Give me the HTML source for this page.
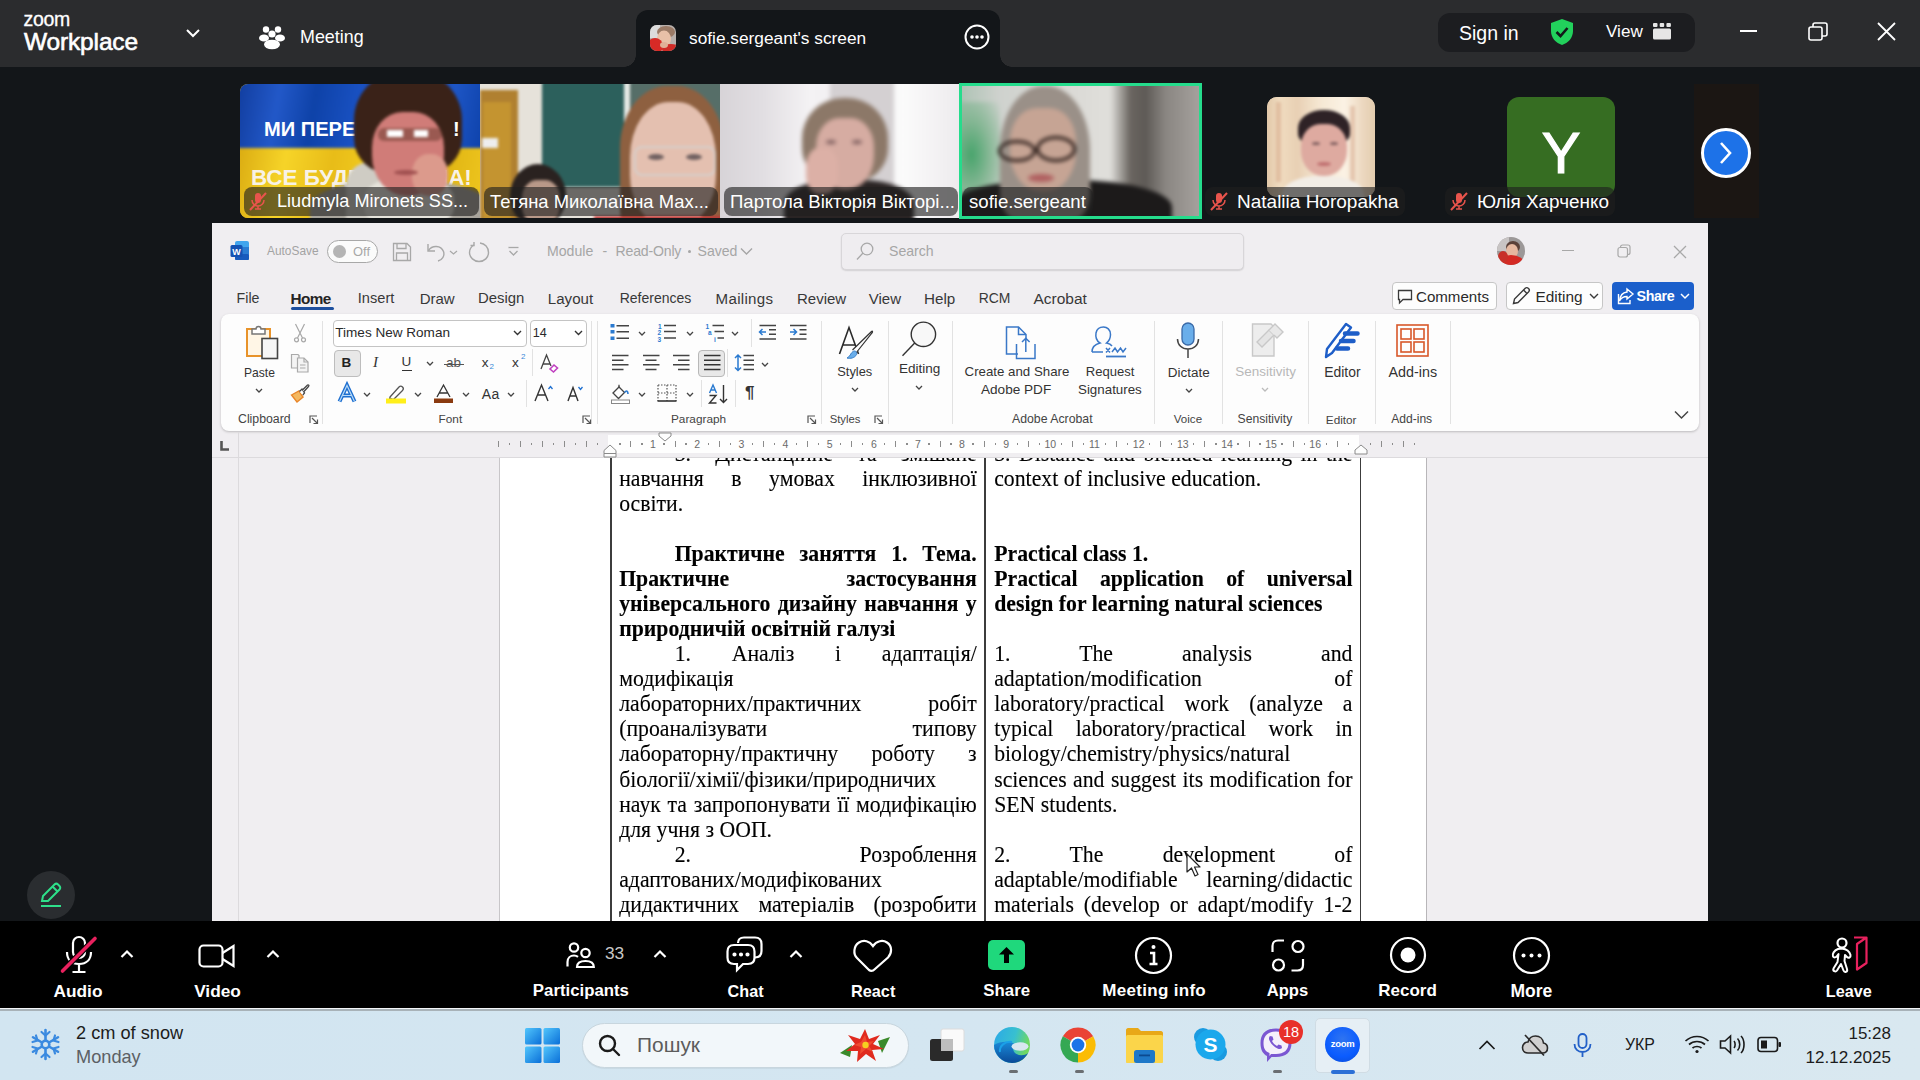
<!DOCTYPE html>
<html><head><meta charset="utf-8">
<style>
*{box-sizing:border-box}
body{margin:0;width:1920px;height:1080px;position:relative;overflow:hidden;background:#131619;font-family:"Liberation Sans",sans-serif}
.a{position:absolute}
.t{position:absolute;white-space:nowrap}
svg{position:absolute;overflow:visible}
.lbl{position:absolute;height:29px;border-radius:8px;background:rgba(30,30,30,0.62);color:#fff;font-size:18.4px;line-height:29px;white-space:nowrap}
.bl{position:absolute;border-radius:50%}
.dl{position:absolute;font-family:"Liberation Serif",serif;font-size:21.75px;line-height:25.07px;color:#000;white-space:nowrap;text-align:left;transform:scaleY(1.065);transform-origin:0 5.8px;-webkit-text-stroke:0.12px #000}
.db{font-weight:bold}
.dj{text-align:justify;text-align-last:justify;white-space:normal}
</style></head><body>
<!-- TOP BAR -->
<div class="a" style="left:0;top:0;width:1920px;height:67px;background:#2b2c2e"></div>
<div class="t" style="left:23.5px;top:10px;font-size:19.5px;line-height:19px;color:#fff;letter-spacing:-0.3px;-webkit-text-stroke:0.3px #fff">zoom</div>
<div class="t" style="left:24px;top:29px;font-size:24.5px;line-height:26px;color:#fff;letter-spacing:-0.15px;-webkit-text-stroke:0.6px #fff">Workplace</div>
<svg style="left:185px;top:28px" width="16" height="10"><path d="M2 2 L8 8 L14 2" stroke="#fff" stroke-width="2" fill="none"/></svg>
<svg style="left:259px;top:24px" width="26" height="26" viewBox="0 0 26 26"><circle cx="7" cy="5.5" r="3.2" fill="#fff"/><circle cx="19" cy="5.5" r="3.2" fill="#fff"/><circle cx="13" cy="10" r="3.6" fill="#fff"/><ellipse cx="5" cy="14" rx="5" ry="3.6" fill="#fff"/><ellipse cx="21" cy="14" rx="5" ry="3.6" fill="#fff"/><ellipse cx="13" cy="20.5" rx="8" ry="4.8" fill="#fff"/></svg>
<div class="t" style="left:300px;top:26px;font-size:17.9px;line-height:22px;color:#fff">Meeting</div>
<!-- active tab -->
<div class="a" style="left:636px;top:10px;width:364px;height:57px;background:#131619;border-radius:12px 12px 0 0"></div>
<div class="a" style="left:624px;top:55px;width:12px;height:12px;background:radial-gradient(circle at 0 0,#2b2c2e 11.5px,#131619 12px)"></div>
<div class="a" style="left:1000px;top:55px;width:12px;height:12px;background:radial-gradient(circle at 100% 0,#2b2c2e 11.5px,#131619 12px)"></div>
<svg style="left:650px;top:25px" width="26" height="26" viewBox="0 0 26 26"><defs><clipPath id="tac"><rect width="26" height="26" rx="7"/></clipPath></defs><g clip-path="url(#tac)"><rect width="26" height="26" fill="#b8b0ac"/><rect x="0" y="0" width="10" height="13" fill="#dcdcdc"/><ellipse cx="16" cy="7" rx="9" ry="6" fill="#9a7a66"/><ellipse cx="14" cy="14" rx="7" ry="8.5" fill="#e8c0a8"/><ellipse cx="5" cy="21" rx="8" ry="8" fill="#d82a26"/><ellipse cx="21" cy="24" rx="9" ry="5" fill="#d02a26"/><ellipse cx="14" cy="20" rx="4" ry="3" fill="#e0b098"/></g></svg>
<div class="t" style="left:689px;top:27px;font-size:17.3px;line-height:22px;color:#fff">sofie.sergeant's screen</div>
<svg style="left:964px;top:24px" width="26" height="26" viewBox="0 0 26 26"><circle cx="13" cy="13" r="11.5" stroke="#fff" stroke-width="2" fill="none"/><circle cx="8" cy="13" r="1.8" fill="#fff"/><circle cx="13" cy="13" r="1.8" fill="#fff"/><circle cx="18" cy="13" r="1.8" fill="#fff"/></svg>
<!-- sign-in pill -->
<div class="a" style="left:1438px;top:13px;width:257px;height:39px;border-radius:12px;background:#1c1d20"></div>
<div class="t" style="left:1459px;top:21px;font-size:19.5px;line-height:24px;color:#fff">Sign in</div>
<svg style="left:1549px;top:18px" width="26" height="28" viewBox="0 0 26 28"><path d="M13 1 L24 5 L24 13 C24 20 19 25 13 27 C7 25 2 20 2 13 L2 5 Z" fill="#22d15c"/><path d="M7.5 14 L11.5 18 L18.5 10" stroke="#13181a" stroke-width="2.6" fill="none"/></svg>
<div class="t" style="left:1606px;top:21px;font-size:17.1px;line-height:22px;color:#fff">View</div>
<svg style="left:1653px;top:23px" width="18" height="17" viewBox="0 0 18 17"><rect x="0" y="0" width="4.5" height="4" rx="1" fill="#e6e6e6"/><rect x="6.7" y="0" width="4.5" height="4" rx="1" fill="#e6e6e6"/><rect x="13.4" y="0" width="4.5" height="4" rx="1" fill="#e6e6e6"/><rect x="0" y="5.5" width="18" height="11" rx="1.5" fill="#e6e6e6"/></svg>
<!-- window controls -->
<div class="a" style="left:1740px;top:30px;width:17px;height:2px;background:#fff"></div>
<svg style="left:1808px;top:22px" width="20" height="20" viewBox="0 0 20 20"><rect x="1" y="5" width="13" height="13" rx="2" stroke="#fff" stroke-width="1.6" fill="none"/><path d="M5 5 V3 a2 2 0 0 1 2 -2 H17 a2 2 0 0 1 2 2 V12 a2 2 0 0 1 -2 2 H14" stroke="#fff" stroke-width="1.6" fill="none"/></svg>
<svg style="left:1877px;top:22px" width="19" height="19" viewBox="0 0 19 19"><path d="M1 1 L18 18 M18 1 L1 18" stroke="#fff" stroke-width="1.8"/></svg>

<!-- STRIP THUMBNAILS -->
<!-- thumb 1: Ukrainian flag -->
<div class="a" style="left:240px;top:84px;width:240px;height:134px;overflow:hidden;border-radius:8px 0 0 8px;background:#e8c01a">
 <div class="a" style="left:-6px;top:-6px;width:252px;height:146px;filter:blur(1.6px)">
  <div class="a" style="left:0;top:0;width:252px;height:70px;background:linear-gradient(100deg,#0f3a9a 0%,#2258c8 18%,#0e42a8 32%,#1a52c4 50%,#0a3c9e 66%,#1e56c6 84%,#0c40a8 100%)"></div>
  <div class="a" style="left:0;top:70px;width:252px;height:76px;background:linear-gradient(100deg,#d8a810 0%,#f6d428 20%,#e8bc18 38%,#f4d020 58%,#dcb010 76%,#f0c820 100%)"></div>
 </div>
 <div class="t" style="left:24px;top:34px;font-size:20.1px;line-height:22px;font-weight:bold;color:#fff">МИ ПЕРЕМОЖЕМО!</div>
 <div class="t" style="left:11px;top:82px;font-size:22.4px;line-height:24px;font-weight:bold;color:#f8f2e6">ВСЕ БУДЕ УКРАЇНА!</div>
 <div class="a" style="left:-6px;top:-6px;width:252px;height:146px;filter:blur(1.4px)">
  <div class="a" style="left:76px;top:102px;width:180px;height:60px;border-radius:45% 45% 0 0;background:#a8a49c"></div>
  <div class="a" style="left:112px;top:84px;width:60px;height:60px;border-radius:40% 40% 0 0;background:#cfccc4"></div>
  <div class="a" style="left:130px;top:100px;width:90px;height:50px;border-radius:40%;background:#e6e4dc"></div>
  <div class="a" style="left:120px;top:-8px;width:108px;height:104px;border-radius:48% 48% 34% 34%;background:#3a2218"></div>
  <div class="a" style="left:138px;top:34px;width:72px;height:84px;border-radius:42% 42% 48% 48%;background:#d07c78"></div>
  <div class="a" style="left:178px;top:76px;width:36px;height:42px;border-radius:45%;background:#dc9a8c"></div>
  <div class="a" style="left:144px;top:50px;width:64px;height:13px;border-radius:6px;background:rgba(110,60,50,0.55)"></div>
  <div class="a" style="left:153px;top:52px;width:16px;height:7px;background:#fff"></div>
  <div class="a" style="left:180px;top:52px;width:14px;height:7px;background:#fff"></div>
  <div class="a" style="left:160px;top:92px;width:24px;height:5px;border-radius:50%;background:#a05050"></div>
 </div>
 <div class="t" style="left:213px;top:34px;font-size:20.1px;line-height:22px;font-weight:bold;color:#fff">!</div>
</div>
<!-- thumb 2: classroom -->
<div class="a" style="left:480px;top:84px;width:240px;height:134px;overflow:hidden;background:#e4e0d8">
 <div class="a" style="left:-6px;top:-6px;width:252px;height:146px;filter:blur(1.6px)">
  <div class="a" style="left:0;top:0;width:252px;height:146px;background:#e6e2da"></div>
  <div class="a" style="left:6px;top:12px;width:38px;height:134px;background:#b08030"></div>
  <div class="a" style="left:9px;top:24px;width:28px;height:122px;background:#c49430"></div>
  <div class="a" style="left:8px;top:60px;width:16px;height:10px;background:#eeeeee"></div>
  <div class="a" style="left:68px;top:0;width:82px;height:109px;background:#2c605c"></div>
  <div class="a" style="left:150px;top:0;width:6px;height:109px;background:#e6eae6"></div>
  <div class="a" style="left:156px;top:0;width:96px;height:116px;background:#566e68"></div>
  <div class="a" style="left:36px;top:86px;width:56px;height:64px;border-radius:50%;background:#2a2220"></div>
  <div class="a" style="left:48px;top:102px;width:38px;height:44px;border-radius:40%;background:#b89888"></div>
  <div class="a" style="left:146px;top:8px;width:104px;height:138px;border-radius:45% 45% 10% 10%;background:#8e6040"></div>
  <div class="a" style="left:156px;top:24px;width:86px;height:122px;border-radius:45% 45% 40% 40%;background:#e4c0b0"></div>
  <div class="a" style="left:160px;top:68px;width:82px;height:30px;border-radius:8px;border:2px solid rgba(210,210,210,0.8)"></div>
  <div class="a" style="left:174px;top:76px;width:16px;height:6px;border-radius:50%;background:#706060"></div>
  <div class="a" style="left:212px;top:76px;width:16px;height:6px;border-radius:50%;background:#706060"></div>
  <div class="a" style="left:120px;top:138px;width:132px;height:10px;background:#c03838"></div>
 </div>
</div>
<!-- thumb 3: bright room -->
<div class="a" style="left:720px;top:84px;width:240px;height:134px;overflow:hidden;background:#eeeaee">
 <div class="a" style="left:-6px;top:-6px;width:252px;height:146px;filter:blur(2px)">
  <div class="a" style="left:0;top:0;width:252px;height:146px;background:linear-gradient(90deg,#d6d2d6 0%,#e2dfe3 20%,#f4f2f4 38%,#f0eef0 55%,#fbfbfb 75%,#ece9ec 100%)"></div>
  <div class="a" style="left:116px;top:0;width:64px;height:120px;background:#d4d0d2"></div>
  <div class="a" style="left:70px;top:102px;width:130px;height:60px;border-radius:40% 40% 0 0;background:#2a2424"></div>
  <div class="a" style="left:88px;top:20px;width:86px;height:84px;border-radius:48% 48% 40% 40%;background:#8c7868"></div>
  <div class="a" style="left:102px;top:40px;width:58px;height:72px;border-radius:40% 40% 48% 48%;background:#d6aca2"></div>
  <div class="a" style="left:92px;top:70px;width:32px;height:46px;border-radius:40%;background:#dcb0a6"></div>
  <div class="a" style="left:112px;top:62px;width:10px;height:4px;border-radius:50%;background:#806060"></div>
  <div class="a" style="left:138px;top:62px;width:10px;height:4px;border-radius:50%;background:#806060"></div>
 </div>
</div>
<!-- thumb 4: sofie -->
<div class="a" style="left:960px;top:84px;width:240px;height:134px;overflow:hidden;background:#d0d0cc">
 <div class="a" style="left:-6px;top:-6px;width:252px;height:146px;filter:blur(2.2px)">
  <div class="a" style="left:0;top:0;width:252px;height:146px;background:linear-gradient(90deg,#a8c0b0 0%,#cfd2ce 18%,#dad9d5 45%,#e0dfdb 62%,#6a6560 70%,#5e5a56 76%,#8a8682 84%,#aaa6a2 100%)"></div>
  <div class="a" style="left:2px;top:24px;width:44px;height:96px;background:radial-gradient(ellipse at 35% 55%,#48a46c 0%,rgba(110,175,130,0.7) 45%,rgba(200,210,200,0) 100%)"></div>
  <div class="a" style="left:-4px;top:102px;width:222px;height:60px;border-radius:45% 45% 0 0;background:#1c1a1a"></div>
  <div class="a" style="left:46px;top:8px;width:90px;height:134px;border-radius:48% 48% 20% 20%;background:#9a9088"></div>
  <div class="a" style="left:56px;top:30px;width:66px;height:84px;border-radius:40% 40% 48% 48%;background:#c6a494"></div>
  <div class="a" style="left:44px;top:62px;width:38px;height:22px;border-radius:50%;border:3.5px solid #2a1c18"></div>
  <div class="a" style="left:82px;top:58px;width:40px;height:26px;border-radius:50%;border:3.5px solid #2a1c18"></div>
  <div class="a" style="left:74px;top:96px;width:26px;height:8px;border-radius:50%;background:#b06060"></div>
 </div>
</div>
<div class="a" style="left:959px;top:83px;width:243px;height:136px;border:3px solid #25dc8c"></div>

<!-- labels -->
<div class="lbl" style="left:244px;top:187px;width:235px"></div>
<svg style="left:248px;top:191px" width="20" height="20" viewBox="0 0 20 20"><rect x="7" y="2" width="6" height="10" rx="3" fill="#e8544c"/><path d="M4 9 a6 6 0 0 0 12 0 M10 15 V18 M7 18 H13" stroke="#e8544c" stroke-width="1.5" fill="none"/><path d="M2 19 L18 2" stroke="#e8544c" stroke-width="2"/></svg>
<div class="t" style="left:277px;top:187px;font-size:18.1px;line-height:29px;color:#fff">Liudmyla Mironets SS...</div>
<div class="lbl" style="left:484px;top:187px;width:234px"></div>
<div class="t" style="left:490px;top:187px;font-size:18.4px;line-height:29px;color:#fff">Тетяна Миколаївна Мах...</div>
<div class="lbl" style="left:724px;top:187px;width:234px"></div>
<div class="t" style="left:730px;top:187px;font-size:18.6px;line-height:29px;color:#fff">Партола Вікторія Вікторі...</div>
<div class="lbl" style="left:963px;top:187px;width:130px"></div>
<div class="t" style="left:969px;top:187px;font-size:18.6px;line-height:29px;color:#fff">sofie.sergeant</div>
<!-- Nataliia -->
<div class="a" style="left:1267px;top:97px;width:108px;height:100px;border-radius:10px;overflow:hidden;background:#ecdcc4">
 <div class="a" style="left:-5px;top:-5px;width:118px;height:110px;filter:blur(1.5px)">
  <div class="a" style="left:0;top:0;width:118px;height:110px;background:linear-gradient(90deg,#dcc0a0 0%,#f0dcc0 15%,#e8d0b4 30%,#f6e8d4 50%,#fbf2e4 70%,#ecd8c0 85%,#e0c8a8 100%)"></div>
  <div class="a" style="left:14px;top:10px;width:5px;height:80px;background:rgba(200,140,110,0.35)"></div>
  <div class="a" style="left:88px;top:14px;width:5px;height:76px;background:rgba(200,140,110,0.35)"></div>
  <div class="a" style="left:20px;top:84px;width:82px;height:40px;border-radius:45% 45% 0 0;background:#f2ede6"></div>
  <div class="a" style="left:36px;top:18px;width:52px;height:36px;border-radius:50% 50% 35% 35%;background:#2e2226"></div>
  <div class="a" style="left:39px;top:32px;width:46px;height:52px;border-radius:42% 42% 48% 48%;background:#deaaa0"></div>
  <div class="a" style="left:50px;top:50px;width:8px;height:3px;border-radius:50%;background:#806060"></div>
  <div class="a" style="left:68px;top:50px;width:8px;height:3px;border-radius:50%;background:#806060"></div>
  <div class="a" style="left:55px;top:70px;width:14px;height:4px;border-radius:50%;background:#c07070"></div>
 </div>
</div>
<div class="lbl" style="left:1205px;top:187px;width:200px"></div>
<svg style="left:1209px;top:191px" width="20" height="20" viewBox="0 0 20 20"><rect x="7" y="2" width="6" height="10" rx="3" fill="#e8544c"/><path d="M4 9 a6 6 0 0 0 12 0 M10 15 V18 M7 18 H13" stroke="#e8544c" stroke-width="1.5" fill="none"/><path d="M2 19 L18 2" stroke="#e8544c" stroke-width="2"/></svg>
<div class="t" style="left:1237px;top:187px;font-size:19px;line-height:29px;color:#fff">Nataliia Horopakha</div>
<!-- Y avatar -->
<div class="a" style="left:1507px;top:97px;width:108px;height:100px;border-radius:12px;background:#366d22"></div>
<div class="t" style="left:1507px;top:123px;width:108px;text-align:center;font-size:58px;line-height:60px;color:#fff;-webkit-text-stroke:1.2px #fff">Y</div>
<div class="lbl" style="left:1445px;top:187px;width:170px"></div>
<svg style="left:1449px;top:191px" width="20" height="20" viewBox="0 0 20 20"><rect x="7" y="2" width="6" height="10" rx="3" fill="#e8544c"/><path d="M4 9 a6 6 0 0 0 12 0 M10 15 V18 M7 18 H13" stroke="#e8544c" stroke-width="1.5" fill="none"/><path d="M2 19 L18 2" stroke="#e8544c" stroke-width="2"/></svg>
<div class="t" style="left:1477px;top:187px;font-size:18.9px;line-height:29px;color:#fff">Юлія Харченко</div>
<!-- right tile + arrow -->
<div class="a" style="left:1694px;top:84px;width:65px;height:134px;background:#1b1613"></div>
<div class="a" style="left:1701px;top:128px;width:50px;height:50px;border-radius:50%;background:#1d72e8;border:3.5px solid #fff"></div>
<svg style="left:1717px;top:141px" width="18" height="24" viewBox="0 0 18 24"><path d="M4 2 L13 12 L4 22" stroke="#fff" stroke-width="2.6" fill="none"/></svg>


<!-- annotate button -->
<div class="a" style="left:27px;top:871px;width:48px;height:48px;border-radius:50%;background:#2a2d30"></div>
<svg style="left:39px;top:881px" width="25" height="27" viewBox="0 0 25 27" fill="none" stroke="#2ee08a" stroke-width="2"><path d="M3 20 L4 15 L15.5 3.5 C16.5 2.5 18 2.5 19 3.5 L20.5 5 C21.5 6 21.5 7.5 20.5 8.5 L9 20 Z"/><path d="M13.5 5.5 L18.5 10.5"/><path d="M2 25 H22"/></svg>
<!-- WORD WINDOW -->
<div class="a" style="left:212px;top:223px;width:1496px;height:698px;background:#f0eef1"></div>
<!-- title bar -->
<svg style="left:230px;top:240px" width="20" height="21" viewBox="0 0 20 21"><rect x="5" y="1" width="14" height="19" rx="2" fill="#41a5ee"/><rect x="5" y="7" width="14" height="7" fill="#2b7cd3"/><rect x="5" y="14" width="14" height="6" rx="1" fill="#185abd"/><rect x="0.5" y="5" width="12" height="12" rx="1.5" fill="#1552b3"/><text x="6.5" y="14.5" font-family="Liberation Sans" font-weight="bold" font-size="9" fill="#fff" text-anchor="middle">W</text></svg>
<div class="t" style="left:267px;top:243px;font-size:11.9px;line-height:17px;color:#a3a3a3">AutoSave</div>
<div class="a" style="left:327px;top:240px;width:51px;height:23px;border-radius:12px;border:1.3px solid #a8a8a8;background:#fbfbfb"></div>
<div class="a" style="left:333px;top:245px;width:13px;height:13px;border-radius:50%;background:#b5b5b5"></div>
<div class="t" style="left:353px;top:243px;font-size:12.9px;line-height:17px;color:#a8a8a8">Off</div>
<svg style="left:392px;top:242px" width="20" height="20" viewBox="0 0 20 20" fill="none" stroke="#a8a8a8" stroke-width="1.3"><path d="M1.5 1.5 H15 L18.5 5 V18.5 H1.5 Z"/><path d="M5 1.5 V6.5 H14 V1.5"/><path d="M4.5 18.5 V11 H15.5 V18.5"/></svg>
<svg style="left:425px;top:242px" width="34" height="20" viewBox="0 0 34 20" fill="none" stroke="#a8a8a8" stroke-width="1.4"><path d="M3 2 V9 H10"/><path d="M3.5 8.5 C7 3 16 3 18.5 9.5 C20 14 17 18 13 19"/><path d="M25 9 L28.5 12 L32 9" stroke-width="1.2"/></svg>
<svg style="left:468px;top:241px" width="22" height="22" viewBox="0 0 22 22" fill="none" stroke="#a8a8a8" stroke-width="1.4"><path d="M12 2 C17 2.5 20.5 6.5 20.5 11.5 C20.5 16.5 16.5 20.5 11 20.5 C6 20.5 1.5 16.5 1.5 11.5 C1.5 8 3.5 5.5 6 4"/><path d="M6 1 V4.5 H2.5"/></svg>
<svg style="left:507px;top:245px" width="13" height="13" viewBox="0 0 13 13" fill="none" stroke="#a8a8a8" stroke-width="1.3"><path d="M1.5 2.5 H11.5"/><path d="M2.5 6 L6.5 10 L10.5 6"/></svg>
<div class="t" style="left:547px;top:242px;font-size:14.1px;line-height:19px;color:#a6a6a6">Module</div>
<div class="t" style="left:602.5px;top:242px;font-size:14.1px;line-height:19px;color:#a6a6a6">-</div>
<div class="t" style="left:615.6px;top:242px;font-size:14.1px;line-height:19px;color:#a6a6a6;letter-spacing:-0.2px">Read-Only</div>
<div class="a" style="left:687.5px;top:249.5px;width:3.5px;height:3.5px;border-radius:50%;background:#a6a6a6"></div>
<div class="t" style="left:697.5px;top:242px;font-size:14.1px;line-height:19px;color:#a6a6a6">Saved</div>
<svg style="left:740px;top:247px" width="13" height="9" viewBox="0 0 13 9" fill="none" stroke="#a6a6a6" stroke-width="1.4"><path d="M1 1.5 L6.5 7 L12 1.5"/></svg>
<div class="a" style="left:841px;top:233px;width:403px;height:37px;border-radius:5px;border:1px solid #d8d6d9;background:#efedf0;box-shadow:0 1px 1.5px rgba(0,0,0,0.12)"></div>
<svg style="left:856px;top:242px" width="18" height="19" viewBox="0 0 18 19" fill="none" stroke="#a8a8a8" stroke-width="1.3"><circle cx="11" cy="7" r="5.8"/><path d="M7 11 L1 17.5"/></svg>
<div class="t" style="left:889px;top:242px;font-size:14.1px;line-height:19px;color:#a6a6a6">Search</div>
<svg style="left:1497px;top:237px" width="28" height="28" viewBox="0 0 28 28"><defs><clipPath id="avc"><circle cx="14" cy="14" r="14"/></clipPath></defs><g clip-path="url(#avc)"><rect width="28" height="28" fill="#9c9898"/><rect x="0" y="0" width="12" height="14" fill="#c8c4c4"/><ellipse cx="16" cy="10" rx="7" ry="6" fill="#5a4038"/><ellipse cx="15" cy="14" rx="6" ry="7" fill="#e6b8a0"/><ellipse cx="14" cy="27" rx="14" ry="9" fill="#d42a24"/><ellipse cx="6" cy="20" rx="5" ry="6" fill="#c83028"/></g></svg>
<div class="a" style="left:1562px;top:250px;width:12px;height:1.3px;background:#a8a8a8"></div>
<svg style="left:1617px;top:244px" width="14" height="14" viewBox="0 0 14 14" fill="none" stroke="#a8a8a8" stroke-width="1.2"><rect x="1" y="3.5" width="9.5" height="9.5" rx="2"/><path d="M3.5 3.5 V3 a2 2 0 0 1 2 -2 H11 a2 2 0 0 1 2 2 V8.5 a2 2 0 0 1 -2 2 H10.5"/></svg>
<svg style="left:1673px;top:245px" width="14" height="14" viewBox="0 0 14 14" fill="none" stroke="#a8a8a8" stroke-width="1.3"><path d="M1 1 L13 13 M13 1 L1 13"/></svg>
<!-- tabs -->
<div class="t" style="left:236.6px;top:289px;font-size:14.2px;line-height:19px;color:#383838">File</div>
<div class="t" style="left:290.6px;top:289px;font-size:15.3px;line-height:19px;color:#242424;font-weight:bold;letter-spacing:-0.6px">Home</div>
<div class="a" style="left:290.6px;top:307px;width:43.5px;height:3px;border-radius:1.5px;background:#1d4f9e"></div>
<div class="t" style="left:357.8px;top:289px;font-size:14.6px;line-height:19px;color:#383838">Insert</div>
<div class="t" style="left:419.7px;top:289px;font-size:15px;line-height:19px;color:#383838">Draw</div>
<div class="t" style="left:478px;top:289px;font-size:14.9px;line-height:19px;color:#383838">Design</div>
<div class="t" style="left:547.8px;top:289px;font-size:15.1px;line-height:19px;color:#383838">Layout</div>
<div class="t" style="left:619.7px;top:289px;font-size:14px;line-height:19px;color:#383838">References</div>
<div class="t" style="left:715.6px;top:289px;font-size:15.1px;line-height:19px;color:#383838;letter-spacing:0.3px">Mailings</div>
<div class="t" style="left:797px;top:289px;font-size:15px;line-height:19px;color:#383838">Review</div>
<div class="t" style="left:868.8px;top:289px;font-size:15px;line-height:19px;color:#383838">View</div>
<div class="t" style="left:924px;top:289px;font-size:15.2px;line-height:19px;color:#383838">Help</div>
<div class="t" style="left:978.8px;top:289px;font-size:13.9px;line-height:19px;color:#383838">RCM</div>
<div class="t" style="left:1033.4px;top:289px;font-size:15.5px;line-height:19px;color:#383838">Acrobat</div>
<!-- buttons -->
<div class="a" style="left:1392px;top:282px;width:105px;height:28px;border-radius:4px;border:1px solid #c6c6c6;background:#fdfdfd"></div>
<svg style="left:1397px;top:289px" width="16" height="16" viewBox="0 0 16 16" fill="none" stroke="#3a3a3a" stroke-width="1.3"><path d="M1.5 1.5 H14.5 V10.5 H6 L2.5 14 V10.5 H1.5 Z"/></svg>
<div class="t" style="left:1416px;top:287px;font-size:15.1px;line-height:19px;color:#2a2a2a">Comments</div>
<div class="a" style="left:1506px;top:282px;width:97px;height:28px;border-radius:4px;border:1px solid #c6c6c6;background:#fdfdfd"></div>
<svg style="left:1511px;top:286px" width="20" height="20" viewBox="0 0 20 20" fill="none" stroke="#3a3a3a" stroke-width="1.4"><path d="M2.5 17.5 L3.5 13 L14 2.5 C15 1.5 16.5 1.5 17.5 2.5 C18.5 3.5 18.5 5 17.5 6 L7 16.5 Z"/><path d="M12.5 4 L16 7.5"/></svg>
<div class="t" style="left:1535.5px;top:287px;font-size:15.4px;line-height:19px;color:#2a2a2a">Editing</div>
<svg style="left:1589px;top:293px" width="10" height="7" viewBox="0 0 10 7" fill="none" stroke="#3a3a3a" stroke-width="1.4"><path d="M1 1 L5 5 L9 1"/></svg>
<div class="a" style="left:1612px;top:282px;width:82px;height:28px;border-radius:4px;background:#1b5fcb"></div>
<svg style="left:1617px;top:287px" width="18" height="18" viewBox="0 0 18 18" fill="none" stroke="#fff" stroke-width="1.4"><path d="M10 2 L16 7 L10 12 V9.5 C6 9.5 4 11 2.5 14 C3 9 5.5 5.5 10 5 Z"/><path d="M1.5 7 V16.5 H13 V13"/></svg>
<div class="t" style="left:1636.5px;top:287px;font-size:14.3px;line-height:19px;color:#fff;font-weight:bold;letter-spacing:-0.4px">Share</div>
<svg style="left:1680px;top:293px" width="10" height="7" viewBox="0 0 10 7" fill="none" stroke="#fff" stroke-width="1.5"><path d="M1 1 L5 5 L9 1"/></svg>
<!-- RIBBON -->
<div class="a" style="left:221px;top:314px;width:1478px;height:117px;border-radius:8px;background:#fdfdfd;box-shadow:0 1px 2.5px rgba(0,0,0,0.22)"></div>
<!-- Clipboard -->
<svg style="left:245px;top:323px" width="34" height="37" viewBox="0 0 34 37"><rect x="2" y="6" width="23" height="27" fill="#fff6e6" stroke="#e8932a" stroke-width="2"/><path d="M7 11 V6 H11 C11 2.5 16 2.5 16 6 H20 V11 Z" fill="#fff" stroke="#777" stroke-width="1.5"/><rect x="17" y="15.5" width="15.5" height="20" fill="#f6f6f6" stroke="#444" stroke-width="1.6"/></svg>
<div class="t" style="left:244px;top:365px;font-size:12.1px;line-height:17px;color:#333">Paste</div>
<svg style="left:255px;top:388px" width="8" height="6" viewBox="0 0 8 6" fill="none" stroke="#444" stroke-width="1.3"><path d="M1 1 L4 4 L7 1"/></svg>
<svg style="left:293px;top:323px" width="14" height="20" viewBox="0 0 14 20" fill="none" stroke="#a8a8a8" stroke-width="1.2"><path d="M2.5 1 L9.5 15 M11.5 1 L4.5 15"/><circle cx="3.5" cy="16.8" r="2"/><circle cx="10.5" cy="16.8" r="2"/></svg>
<svg style="left:290px;top:353px" width="20" height="20" viewBox="0 0 20 20" fill="none" stroke="#aaa" stroke-width="1.2"><path d="M1.5 1.5 H8 L9 2.5 V15 H1.5 Z" fill="#f4f4f4"/><path d="M7.5 5 H14 L18 9 V19 H7.5 Z" fill="#f4f4f4"/><path d="M14 5 V9 H18 M10 12 H15.5 M10 15 H15.5"/></svg>
<svg style="left:290px;top:383px" width="20" height="20" viewBox="0 0 20 20"><path d="M1.5 12 L9 8 L13 14 L7 19 Z" fill="#f4b860" stroke="#e8862a" stroke-width="1.4"/><path d="M9.5 8.5 L12 6 L14.5 10 L12.8 12.2" fill="#fff" stroke="#444" stroke-width="1.3"/><path d="M12.5 7 L17.5 2 C18.5 1.5 19.5 2.5 18.5 3.5 L14 8.5" fill="#fff" stroke="#444" stroke-width="1.3"/></svg>
<div class="t" style="left:238px;top:411px;font-size:12.3px;line-height:17px;color:#444">Clipboard</div>
<svg style="left:309px;top:415px" width="10" height="10" viewBox="0 0 10 10" fill="none" stroke="#555" stroke-width="1.2"><path d="M1 8 V1 H8"/><path d="M3 3 L8.5 8.5 M4.5 8.5 H8.5 V4.5"/></svg>
<div class="a" style="left:322px;top:321px;width:1px;height:103px;background:#e2e2e2"></div>
<!-- Font -->
<div class="a" style="left:333px;top:320px;width:194px;height:27px;border-radius:4px;border:1px solid #c4c4c4;background:#fff"></div>
<div class="t" style="left:335.3px;top:324px;font-size:13.55px;line-height:18px;color:#2a2a2a">Times New Roman</div>
<svg style="left:513px;top:330px" width="9" height="6" viewBox="0 0 9 6" fill="none" stroke="#333" stroke-width="1.4"><path d="M1 1 L4.5 4.5 L8 1"/></svg>
<div class="a" style="left:530px;top:320px;width:57px;height:27px;border-radius:4px;border:1px solid #c4c4c4;background:#fff"></div>
<div class="t" style="left:532.8px;top:324px;font-size:12.6px;line-height:18px;color:#2a2a2a">14</div>
<svg style="left:574px;top:330px" width="9" height="6" viewBox="0 0 9 6" fill="none" stroke="#333" stroke-width="1.4"><path d="M1 1 L4.5 4.5 L8 1"/></svg>
<div class="a" style="left:591px;top:321px;width:1px;height:103px;background:#e2e2e2"></div>
<div class="a" style="left:333.5px;top:349.5px;width:27px;height:27px;border-radius:4px;border:1px solid #bdbdbd;background:#e8e8e8"></div>
<div class="t" style="left:341.5px;top:354px;font-size:13.5px;line-height:18px;color:#222;font-weight:bold">B</div>
<div class="t" style="left:373px;top:353px;font-size:15px;line-height:18px;color:#333;font-family:'Liberation Serif';font-style:italic">I</div>
<div class="t" style="left:401.5px;top:353px;font-size:13.5px;line-height:18px;color:#333">U</div>
<div class="a" style="left:401.5px;top:369.5px;width:10.5px;height:1.2px;background:#333"></div>
<svg style="left:426px;top:361px" width="8" height="6" viewBox="0 0 8 6" fill="none" stroke="#444" stroke-width="1.3"><path d="M1 1 L4 4 L7 1"/></svg>
<div class="t" style="left:446px;top:354px;font-size:13.5px;line-height:18px;color:#555">ab</div>
<div class="a" style="left:444px;top:364px;width:20px;height:1.2px;background:#555"></div>
<div class="t" style="left:481.7px;top:354px;font-size:13.5px;line-height:18px;color:#333">x</div>
<div class="t" style="left:489.5px;top:362px;font-size:8px;line-height:10px;color:#3a8ad8">2</div>
<div class="t" style="left:512px;top:354px;font-size:13.5px;line-height:18px;color:#333">x</div>
<div class="t" style="left:521px;top:352px;font-size:8px;line-height:10px;color:#3a8ad8">2</div>
<div class="a" style="left:532px;top:349px;width:1px;height:27px;background:#e2e2e2"></div>
<svg style="left:540px;top:354px" width="19" height="19" viewBox="0 0 19 19"><path d="M1 15 L6.5 1 L11 12 M3 10 H10" fill="none" stroke="#444" stroke-width="1.3"/><path d="M10 15 L14 11 L17.5 14 L13.5 18 Z" fill="#fff" stroke="#c040c0" stroke-width="1.6"/></svg>
<svg style="left:337px;top:384px" width="20" height="19" viewBox="0 0 20 19"><path d="M2.5 17.5 L10 1.5 L17.5 17.5 M5.5 11.5 H14.5" fill="none" stroke="#1e6fd0" stroke-width="4"/><path d="M2.5 17.5 L10 1.5 L17.5 17.5 M5.5 11.5 H14.5" fill="none" stroke="#b8daf6" stroke-width="1.2"/></svg>
<svg style="left:363px;top:392px" width="8" height="6" viewBox="0 0 8 6" fill="none" stroke="#444" stroke-width="1.3"><path d="M1 1 L4 4 L7 1"/></svg>
<svg style="left:386px;top:384px" width="20" height="20" viewBox="0 0 20 20"><path d="M4 13 L13 3 C14 2 15.5 2 16.5 3 C17.5 4 17.5 5.5 16.5 6.5 L7.5 15.5 L3.5 15.5 Z" fill="#fff" stroke="#555" stroke-width="1.3"/><path d="M3.5 15.5 L4 13 L7.5 15.5 Z" fill="#777"/><rect x="0" y="14.5" width="20" height="5" fill="#ffef1a"/></svg>
<svg style="left:414px;top:392px" width="8" height="6" viewBox="0 0 8 6" fill="none" stroke="#444" stroke-width="1.3"><path d="M1 1 L4 4 L7 1"/></svg>
<svg style="left:434px;top:384px" width="19" height="19" viewBox="0 0 19 19"><path d="M3 13 L9.5 1 L16 13 M5.5 9 H13.5" fill="none" stroke="#333" stroke-width="1.3"/><rect x="0" y="14.5" width="19" height="4.5" fill="#8a3a10"/></svg>
<svg style="left:462px;top:392px" width="8" height="6" viewBox="0 0 8 6" fill="none" stroke="#444" stroke-width="1.3"><path d="M1 1 L4 4 L7 1"/></svg>
<div class="t" style="left:481.7px;top:385px;font-size:14px;line-height:18px;color:#333;letter-spacing:0.5px">Aa</div>
<svg style="left:507px;top:392px" width="8" height="6" viewBox="0 0 8 6" fill="none" stroke="#444" stroke-width="1.3"><path d="M1 1 L4 4 L7 1"/></svg>
<div class="a" style="left:526px;top:380px;width:1px;height:27px;background:#e2e2e2"></div>
<svg style="left:534px;top:384px" width="20" height="18" viewBox="0 0 20 18" fill="none"><path d="M1 17 L7.5 1 L14 17 M3.5 11 H11.5" stroke="#333" stroke-width="1.4"/><path d="M14.5 5 L16.5 2.5 L18.5 5" stroke="#1e6fd0" stroke-width="1.3"/></svg>
<svg style="left:567px;top:386px" width="17" height="16" viewBox="0 0 17 16" fill="none"><path d="M1 15 L6 1.5 L11 15 M3 10 H9" stroke="#333" stroke-width="1.4"/><path d="M11.5 1 L13.5 3.5 L15.5 1" stroke="#1e6fd0" stroke-width="1.3"/></svg>
<div class="t" style="left:438.6px;top:411px;font-size:11.8px;line-height:17px;color:#444">Font</div>
<svg style="left:582px;top:415px" width="10" height="10" viewBox="0 0 10 10" fill="none" stroke="#555" stroke-width="1.2"><path d="M1 8 V1 H8"/><path d="M3 3 L8.5 8.5 M4.5 8.5 H8.5 V4.5"/></svg>
<div class="a" style="left:596.5px;top:321px;width:1px;height:103px;background:#e2e2e2"></div>
<!-- Paragraph -->
<svg style="left:610px;top:324px" width="20" height="17" viewBox="0 0 20 17"><g fill="#2a7ad0"><rect x="0.5" y="0" width="4" height="3.5"/><rect x="0.5" y="6" width="4" height="3.5"/><rect x="0.5" y="12.5" width="4" height="3.5"/></g><g stroke="#444" stroke-width="1.4"><path d="M6.5 1.8 H19 M6.5 7.8 H19 M6.5 14.3 H19"/></g></svg>
<svg style="left:638px;top:331px" width="8" height="6" viewBox="0 0 8 6" fill="none" stroke="#444" stroke-width="1.3"><path d="M1 1 L4 4 L7 1"/></svg>
<svg style="left:657px;top:323px" width="20" height="19" viewBox="0 0 20 19"><g fill="#2a7ad0" font-family="Liberation Sans" font-size="6.5" font-weight="bold"><text x="1" y="6">1</text><text x="0.5" y="12">2</text><text x="0.5" y="18.5">3</text></g><g stroke="#444" stroke-width="1.4"><path d="M7 2.5 H19 M7 8.5 H19 M7 15 H19"/></g></svg>
<svg style="left:686px;top:331px" width="8" height="6" viewBox="0 0 8 6" fill="none" stroke="#444" stroke-width="1.3"><path d="M1 1 L4 4 L7 1"/></svg>
<svg style="left:705px;top:323px" width="20" height="19" viewBox="0 0 20 19"><g fill="#2a7ad0" font-family="Liberation Sans" font-size="6.5" font-weight="bold"><text x="0.5" y="6">1</text><text x="3" y="12">a</text><text x="9" y="18.5">i</text></g><g stroke="#444" stroke-width="1.4"><path d="M7.5 2.5 H19 M9.5 8.5 H19 M12.5 15 H19"/></g></svg>
<svg style="left:731px;top:331px" width="8" height="6" viewBox="0 0 8 6" fill="none" stroke="#444" stroke-width="1.3"><path d="M1 1 L4 4 L7 1"/></svg>
<div class="a" style="left:750.5px;top:319px;width:1px;height:28px;background:#e2e2e2"></div>
<svg style="left:758px;top:324px" width="19" height="17" viewBox="0 0 19 17"><g stroke="#444" stroke-width="1.4"><path d="M1.5 1.5 H18 M11 5.8 H18 M11 10.3 H18 M1.5 15 H18"/></g><path d="M8 8 H1.5 M4.5 5 L1.5 8 L4.5 11" fill="none" stroke="#2a7ad0" stroke-width="1.5"/></svg>
<svg style="left:789px;top:324px" width="19" height="17" viewBox="0 0 19 17"><g stroke="#444" stroke-width="1.4"><path d="M1 1.5 H17.5 M10.5 5.8 H17.5 M10.5 10.3 H17.5 M1 15 H17.5"/></g><path d="M1 8 H7.5 M4.5 5 L7.5 8 L4.5 11" fill="none" stroke="#2a7ad0" stroke-width="1.5"/></svg>
<svg style="left:611px;top:354px" width="18" height="17" viewBox="0 0 18 17" stroke="#444" stroke-width="1.4"><path d="M1 1.5 H17.5 M1 6.3 H12.5 M1 10.8 H17.5 M1 15.5 H12.5"/></svg>
<svg style="left:641.5px;top:354px" width="18" height="17" viewBox="0 0 18 17" stroke="#444" stroke-width="1.4"><path d="M1 1.5 H17.5 M3.5 6.3 H14.5 M1 10.8 H17.5 M3.5 15.5 H14.5"/></svg>
<svg style="left:672px;top:354px" width="18" height="17" viewBox="0 0 18 17" stroke="#444" stroke-width="1.4"><path d="M1 1.5 H17.5 M6 6.3 H17.5 M1 10.8 H17.5 M6 15.5 H17.5"/></svg>
<div class="a" style="left:697.5px;top:349.5px;width:27.5px;height:27px;border-radius:4px;border:1px solid #b8b8b8;background:#e8e8e8"></div>
<svg style="left:702.5px;top:354px" width="18" height="17" viewBox="0 0 18 17" stroke="#333" stroke-width="1.5"><path d="M1 1.5 H17.5 M1 6.3 H17.5 M1 10.8 H17.5 M1 15.5 H17.5"/></svg>
<div class="a" style="left:727.2px;top:349px;width:1px;height:28px;background:#e2e2e2"></div>
<svg style="left:734px;top:354px" width="21" height="18" viewBox="0 0 21 18"><path d="M4 1 V16.5 M1 4 L4 1 L7 4 M1 13.5 L4 16.5 L7 13.5" fill="none" stroke="#2a7ad0" stroke-width="1.5"/><g stroke="#444" stroke-width="1.4"><path d="M9.5 1.5 H20 M9.5 6.3 H20 M9.5 10.8 H20 M9.5 15.5 H20"/></g></svg>
<svg style="left:761px;top:362px" width="8" height="6" viewBox="0 0 8 6" fill="none" stroke="#444" stroke-width="1.3"><path d="M1 1 L4 4 L7 1"/></svg>
<svg style="left:611px;top:384px" width="19" height="20" viewBox="0 0 19 20"><path d="M2 9 L8 3 L13.5 8.5 L7.5 14.5 Z" fill="#fff" stroke="#444" stroke-width="1.3"/><path d="M8 3 V0.8" stroke="#444" stroke-width="1.3"/><path d="M13.5 8.5 C15.5 6 17 7 17 10" fill="none" stroke="#2a7ad0" stroke-width="1.6"/><rect x="0.5" y="16" width="18" height="3.5" fill="#fff" stroke="#888" stroke-width="1"/></svg>
<svg style="left:638px;top:392px" width="8" height="6" viewBox="0 0 8 6" fill="none" stroke="#444" stroke-width="1.3"><path d="M1 1 L4 4 L7 1"/></svg>
<svg style="left:657px;top:384px" width="20" height="18" viewBox="0 0 20 18" fill="none"><path d="M1 1 H19 V17 M1 1 V17 M10 1 V17 M1 9 H19" stroke="#555" stroke-width="1.2" stroke-dasharray="1.5 1.5"/><path d="M0.5 17 H19.5" stroke="#333" stroke-width="1.6"/></svg>
<svg style="left:686px;top:392px" width="8" height="6" viewBox="0 0 8 6" fill="none" stroke="#444" stroke-width="1.3"><path d="M1 1 L4 4 L7 1"/></svg>
<div class="a" style="left:701.4px;top:380px;width:1px;height:27px;background:#e2e2e2"></div>
<svg style="left:708px;top:384px" width="21" height="20" viewBox="0 0 21 20"><path d="M1.5 9 L5 1 L8.5 9 M2.8 6 H7.2" fill="none" stroke="#2a7ad0" stroke-width="1.4"/><path d="M1.5 11.5 H8 L1.5 19 H8.5" fill="none" stroke="#333" stroke-width="1.4"/><path d="M15.5 1 V18.5 M12 15 L15.5 18.5 L19 15" fill="none" stroke="#333" stroke-width="1.4"/></svg>
<div class="a" style="left:734.6px;top:380px;width:1px;height:27px;background:#e2e2e2"></div>
<div class="t" style="left:745px;top:383px;font-size:17px;line-height:20px;color:#333;font-weight:bold">¶</div>
<div class="t" style="left:671px;top:411px;font-size:11.8px;line-height:17px;color:#444">Paragraph</div>
<svg style="left:806.5px;top:415px" width="10" height="10" viewBox="0 0 10 10" fill="none" stroke="#555" stroke-width="1.2"><path d="M1 8 V1 H8"/><path d="M3 3 L8.5 8.5 M4.5 8.5 H8.5 V4.5"/></svg>
<div class="a" style="left:820.6px;top:321px;width:1px;height:103px;background:#e2e2e2"></div>
<!-- Styles -->
<svg style="left:838px;top:326px" width="36" height="34" viewBox="0 0 36 34"><path d="M1.5 28 L11 1.5 L20.5 28 M5 19 H17" fill="none" stroke="#2a2a2a" stroke-width="1.6"/><path d="M14.5 24 L33.5 5.5 C34.5 4.5 35 6 34 7 L18 27" fill="#fff" stroke="#333" stroke-width="1.2"/><path d="M9 32 C12 31 12.5 27 15 25.5 C17 24 19.5 26 18.5 28.5 C17 32 12 33 9 32 Z" fill="#6aaeea" stroke="#3a80c8" stroke-width="1"/></svg>
<div class="t" style="left:837.3px;top:363px;font-size:12.85px;line-height:18px;color:#333">Styles</div>
<svg style="left:851px;top:387px" width="8" height="6" viewBox="0 0 8 6" fill="none" stroke="#444" stroke-width="1.3"><path d="M1 1 L4 4 L7 1"/></svg>
<div class="t" style="left:829.7px;top:411px;font-size:11.3px;line-height:17px;color:#444">Styles</div>
<svg style="left:874px;top:415px" width="10" height="10" viewBox="0 0 10 10" fill="none" stroke="#555" stroke-width="1.2"><path d="M1 8 V1 H8"/><path d="M3 3 L8.5 8.5 M4.5 8.5 H8.5 V4.5"/></svg>
<div class="a" style="left:887.7px;top:321px;width:1px;height:103px;background:#e2e2e2"></div>
<!-- Editing -->
<svg style="left:901px;top:321px" width="38" height="37" viewBox="0 0 38 37" fill="none" stroke="#333" stroke-width="1.4"><circle cx="22.4" cy="13.3" r="12.2" fill="#f8f8f8"/><path d="M13.7 22 L1.5 34.7"/></svg>
<div class="t" style="left:898.9px;top:360px;font-size:13.54px;line-height:18px;color:#333">Editing</div>
<svg style="left:915px;top:385px" width="8" height="6" viewBox="0 0 8 6" fill="none" stroke="#444" stroke-width="1.3"><path d="M1 1 L4 4 L7 1"/></svg>
<div class="a" style="left:952.4px;top:321px;width:1px;height:103px;background:#e2e2e2"></div>
<!-- Adobe Acrobat -->
<svg style="left:1005px;top:326px" width="32" height="34" viewBox="0 0 32 34" fill="none" stroke="#3a78c8" stroke-width="1.5"><path d="M13 28 H1.5 V1 H13.5 L21 8.5 V14"/><path d="M13.5 1 V8.5 H21"/><path d="M11.5 18 V32.5 H30 V18 M20.8 12.5 V26 M17 16 L20.8 12.2 L24.6 16"/></svg>
<div class="t" style="left:964.6px;top:363px;font-size:13.28px;line-height:18px;color:#333">Create and Share</div>
<div class="t" style="left:981px;top:381px;font-size:13.58px;line-height:18px;color:#333">Adobe PDF</div>
<svg style="left:1090px;top:326px" width="38" height="33" viewBox="0 0 38 33" fill="none" stroke="#3a78c8" stroke-width="1.5"><path d="M2 26 C2 20 6 18 10 17 C6 14.5 5.5 10 6 7 C7 2 11 1 13.5 1 C17 1 20.5 3.5 20.5 8.5 C20.5 12 19 15 16.5 17 C19 17.5 21 18.5 22 20"/><path d="M2 26 H13"/><path d="M16 22 L20 26.5 M20 22 L16 26.5 M22 26 L25 22 L27.5 26 L30.5 22 L33 26 L36 22"/><path d="M16 30.5 H36" stroke-width="1.8"/></svg>
<div class="t" style="left:1085.8px;top:363px;font-size:13.07px;line-height:18px;color:#333">Request</div>
<div class="t" style="left:1078px;top:381px;font-size:13.35px;line-height:18px;color:#333">Signatures</div>
<div class="t" style="left:1012px;top:411px;font-size:12.29px;line-height:17px;color:#444">Adobe Acrobat</div>
<div class="a" style="left:1154px;top:321px;width:1px;height:103px;background:#e2e2e2"></div>
<!-- Voice -->
<svg style="left:1176px;top:322px" width="24" height="37" viewBox="0 0 24 37"><rect x="6" y="1" width="12" height="22" rx="6" fill="#6aaeea" stroke="#3a6aa8" stroke-width="1.3"/><path d="M1.5 17 C1.5 23 6 27 12 27 C18 27 22.5 23 22.5 17 M12 27 V36" fill="none" stroke="#444" stroke-width="1.5"/></svg>
<div class="t" style="left:1167.8px;top:364px;font-size:13.46px;line-height:18px;color:#333">Dictate</div>
<svg style="left:1185px;top:388px" width="8" height="6" viewBox="0 0 8 6" fill="none" stroke="#444" stroke-width="1.3"><path d="M1 1 L4 4 L7 1"/></svg>
<div class="t" style="left:1173.8px;top:411px;font-size:11.57px;line-height:17px;color:#444">Voice</div>
<div class="a" style="left:1222px;top:321px;width:1px;height:103px;background:#e2e2e2"></div>
<!-- Sensitivity -->
<svg style="left:1251px;top:322px" width="34" height="36" viewBox="0 0 34 36"><path d="M1.5 2 H20 L23 5 V34 H1.5 Z" fill="#ededed" stroke="#c8c8c8" stroke-width="1.4"/><path d="M6 20 L18 8 L23 13 L11 25 Z" fill="#e4e4e4" stroke="#c8c8c8" stroke-width="1.4"/><path d="M18 8 L24 2 L32 10 L26 16 L23 13" fill="#e8e8e8" stroke="#c8c8c8" stroke-width="1.4"/></svg>
<div class="t" style="left:1235.3px;top:363px;font-size:13.48px;line-height:18px;color:#b8b8b8">Sensitivity</div>
<svg style="left:1261px;top:387px" width="8" height="6" viewBox="0 0 8 6" fill="none" stroke="#bbb" stroke-width="1.3"><path d="M1 1 L4 4 L7 1"/></svg>
<div class="t" style="left:1237.6px;top:411px;font-size:12.15px;line-height:17px;color:#444">Sensitivity</div>
<div class="a" style="left:1308px;top:321px;width:1px;height:103px;background:#e2e2e2"></div>
<!-- Editor -->
<svg style="left:1324px;top:322px" width="37" height="37" viewBox="0 0 37 37"><path d="M2 35 L3 27 L22 2 L27 5.5 L8 31 Z" fill="#fff" stroke="#1e5ec8" stroke-width="2.4" stroke-linejoin="round"/><g stroke="#1e5ec8" stroke-width="4.5" stroke-linecap="round"><path d="M21 11.5 H33.5 M17 19 H29.5 M13 26.5 H24"/></g></svg>
<div class="t" style="left:1324.3px;top:363px;font-size:13.9px;line-height:18px;color:#333">Editor</div>
<div class="t" style="left:1325.8px;top:411px;font-size:11.75px;line-height:17px;color:#444">Editor</div>
<div class="a" style="left:1375px;top:321px;width:1px;height:103px;background:#e2e2e2"></div>
<!-- Add-ins -->
<svg style="left:1396px;top:324px" width="33" height="33" viewBox="0 0 33 33" fill="none" stroke="#d8582a" stroke-width="1.6"><rect x="1" y="1" width="31" height="31"/><rect x="5" y="5" width="10" height="10"/><rect x="18" y="5" width="10" height="10"/><rect x="5" y="18" width="10" height="10"/><rect x="18" y="18" width="10" height="10"/></svg>
<div class="t" style="left:1388.5px;top:363px;font-size:14.33px;line-height:18px;color:#333">Add-ins</div>
<div class="t" style="left:1391.2px;top:411px;font-size:12.09px;line-height:17px;color:#444">Add-ins</div>
<div class="a" style="left:1449.5px;top:321px;width:1px;height:103px;background:#e2e2e2"></div>
<svg style="left:1674px;top:410px" width="15" height="10" viewBox="0 0 15 10" fill="none" stroke="#444" stroke-width="1.5"><path d="M1 1.5 L7.5 8 L14 1.5"/></svg>

<!-- RULER -->
<div class="a" style="left:608px;top:435px;width:751px;height:18px;background:#fefefe"></div>
<div class="a" style="left:212px;top:457px;width:1496px;height:1px;background:#dcdadd"></div>
<div class="a" style="left:238px;top:432px;width:1px;height:489px;background:#dcdadd"></div>
<svg style="left:220px;top:441px" width="10" height="10" viewBox="0 0 10 10"><path d="M1.5 0 V8.5 H9" stroke="#555" stroke-width="2.6" fill="none"/></svg>
<div class="a" style="left:498.0px;top:441px;width:1px;height:6px;background:#8c8c8c"></div>
<div class="a" style="left:508.8px;top:443.3px;width:1.4px;height:1.4px;background:#8c8c8c"></div>
<div class="a" style="left:520.1px;top:441px;width:1px;height:6px;background:#8c8c8c"></div>
<div class="a" style="left:530.9px;top:443.3px;width:1.4px;height:1.4px;background:#8c8c8c"></div>
<div class="a" style="left:542.1px;top:441px;width:1px;height:6px;background:#8c8c8c"></div>
<div class="a" style="left:553.0px;top:443.3px;width:1.4px;height:1.4px;background:#8c8c8c"></div>
<div class="a" style="left:564.2px;top:441px;width:1px;height:6px;background:#8c8c8c"></div>
<div class="a" style="left:575.0px;top:443.3px;width:1.4px;height:1.4px;background:#8c8c8c"></div>
<div class="a" style="left:586.3px;top:441px;width:1px;height:6px;background:#8c8c8c"></div>
<div class="a" style="left:597.1px;top:443.3px;width:1.4px;height:1.4px;background:#8c8c8c"></div>
<div class="a" style="left:619.2px;top:443.3px;width:1.4px;height:1.4px;background:#8c8c8c"></div>
<div class="a" style="left:630.4px;top:441px;width:1px;height:6px;background:#8c8c8c"></div>
<div class="a" style="left:641.3px;top:443.3px;width:1.4px;height:1.4px;background:#8c8c8c"></div>
<div class="t" style="left:643.0px;top:437px;width:20px;text-align:center;font-size:10.5px;line-height:14px;color:#6a6a6a">1</div>
<div class="a" style="left:663.3px;top:443.3px;width:1.4px;height:1.4px;background:#8c8c8c"></div>
<div class="a" style="left:674.6px;top:441px;width:1px;height:6px;background:#8c8c8c"></div>
<div class="a" style="left:685.4px;top:443.3px;width:1.4px;height:1.4px;background:#8c8c8c"></div>
<div class="t" style="left:687.1px;top:437px;width:20px;text-align:center;font-size:10.5px;line-height:14px;color:#6a6a6a">2</div>
<div class="a" style="left:707.5px;top:443.3px;width:1.4px;height:1.4px;background:#8c8c8c"></div>
<div class="a" style="left:718.7px;top:441px;width:1px;height:6px;background:#8c8c8c"></div>
<div class="a" style="left:729.6px;top:443.3px;width:1.4px;height:1.4px;background:#8c8c8c"></div>
<div class="t" style="left:731.3px;top:437px;width:20px;text-align:center;font-size:10.5px;line-height:14px;color:#6a6a6a">3</div>
<div class="a" style="left:751.6px;top:443.3px;width:1.4px;height:1.4px;background:#8c8c8c"></div>
<div class="a" style="left:762.9px;top:441px;width:1px;height:6px;background:#8c8c8c"></div>
<div class="a" style="left:773.7px;top:443.3px;width:1.4px;height:1.4px;background:#8c8c8c"></div>
<div class="t" style="left:775.5px;top:437px;width:20px;text-align:center;font-size:10.5px;line-height:14px;color:#6a6a6a">4</div>
<div class="a" style="left:795.8px;top:443.3px;width:1.4px;height:1.4px;background:#8c8c8c"></div>
<div class="a" style="left:807.0px;top:441px;width:1px;height:6px;background:#8c8c8c"></div>
<div class="a" style="left:817.9px;top:443.3px;width:1.4px;height:1.4px;background:#8c8c8c"></div>
<div class="t" style="left:819.6px;top:437px;width:20px;text-align:center;font-size:10.5px;line-height:14px;color:#6a6a6a">5</div>
<div class="a" style="left:839.9px;top:443.3px;width:1.4px;height:1.4px;background:#8c8c8c"></div>
<div class="a" style="left:851.2px;top:441px;width:1px;height:6px;background:#8c8c8c"></div>
<div class="a" style="left:862.0px;top:443.3px;width:1.4px;height:1.4px;background:#8c8c8c"></div>
<div class="t" style="left:863.8px;top:437px;width:20px;text-align:center;font-size:10.5px;line-height:14px;color:#6a6a6a">6</div>
<div class="a" style="left:884.1px;top:443.3px;width:1.4px;height:1.4px;background:#8c8c8c"></div>
<div class="a" style="left:895.3px;top:441px;width:1px;height:6px;background:#8c8c8c"></div>
<div class="a" style="left:906.2px;top:443.3px;width:1.4px;height:1.4px;background:#8c8c8c"></div>
<div class="t" style="left:907.9px;top:437px;width:20px;text-align:center;font-size:10.5px;line-height:14px;color:#6a6a6a">7</div>
<div class="a" style="left:928.2px;top:443.3px;width:1.4px;height:1.4px;background:#8c8c8c"></div>
<div class="a" style="left:939.5px;top:441px;width:1px;height:6px;background:#8c8c8c"></div>
<div class="a" style="left:950.3px;top:443.3px;width:1.4px;height:1.4px;background:#8c8c8c"></div>
<div class="t" style="left:952.0px;top:437px;width:20px;text-align:center;font-size:10.5px;line-height:14px;color:#6a6a6a">8</div>
<div class="a" style="left:972.4px;top:443.3px;width:1.4px;height:1.4px;background:#8c8c8c"></div>
<div class="a" style="left:983.6px;top:441px;width:1px;height:6px;background:#8c8c8c"></div>
<div class="a" style="left:994.5px;top:443.3px;width:1.4px;height:1.4px;background:#8c8c8c"></div>
<div class="t" style="left:996.2px;top:437px;width:20px;text-align:center;font-size:10.5px;line-height:14px;color:#6a6a6a">9</div>
<div class="a" style="left:1016.5px;top:443.3px;width:1.4px;height:1.4px;background:#8c8c8c"></div>
<div class="a" style="left:1027.8px;top:441px;width:1px;height:6px;background:#8c8c8c"></div>
<div class="a" style="left:1038.6px;top:443.3px;width:1.4px;height:1.4px;background:#8c8c8c"></div>
<div class="t" style="left:1040.3px;top:437px;width:20px;text-align:center;font-size:10.5px;line-height:14px;color:#6a6a6a">10</div>
<div class="a" style="left:1060.7px;top:443.3px;width:1.4px;height:1.4px;background:#8c8c8c"></div>
<div class="a" style="left:1071.9px;top:441px;width:1px;height:6px;background:#8c8c8c"></div>
<div class="a" style="left:1082.8px;top:443.3px;width:1.4px;height:1.4px;background:#8c8c8c"></div>
<div class="t" style="left:1084.5px;top:437px;width:20px;text-align:center;font-size:10.5px;line-height:14px;color:#6a6a6a">11</div>
<div class="a" style="left:1104.8px;top:443.3px;width:1.4px;height:1.4px;background:#8c8c8c"></div>
<div class="a" style="left:1116.1px;top:441px;width:1px;height:6px;background:#8c8c8c"></div>
<div class="a" style="left:1126.9px;top:443.3px;width:1.4px;height:1.4px;background:#8c8c8c"></div>
<div class="t" style="left:1128.7px;top:437px;width:20px;text-align:center;font-size:10.5px;line-height:14px;color:#6a6a6a">12</div>
<div class="a" style="left:1149.0px;top:443.3px;width:1.4px;height:1.4px;background:#8c8c8c"></div>
<div class="a" style="left:1160.2px;top:441px;width:1px;height:6px;background:#8c8c8c"></div>
<div class="a" style="left:1171.1px;top:443.3px;width:1.4px;height:1.4px;background:#8c8c8c"></div>
<div class="t" style="left:1172.8px;top:437px;width:20px;text-align:center;font-size:10.5px;line-height:14px;color:#6a6a6a">13</div>
<div class="a" style="left:1193.1px;top:443.3px;width:1.4px;height:1.4px;background:#8c8c8c"></div>
<div class="a" style="left:1204.4px;top:441px;width:1px;height:6px;background:#8c8c8c"></div>
<div class="a" style="left:1215.2px;top:443.3px;width:1.4px;height:1.4px;background:#8c8c8c"></div>
<div class="t" style="left:1217.0px;top:437px;width:20px;text-align:center;font-size:10.5px;line-height:14px;color:#6a6a6a">14</div>
<div class="a" style="left:1237.3px;top:443.3px;width:1.4px;height:1.4px;background:#8c8c8c"></div>
<div class="a" style="left:1248.5px;top:441px;width:1px;height:6px;background:#8c8c8c"></div>
<div class="a" style="left:1259.4px;top:443.3px;width:1.4px;height:1.4px;background:#8c8c8c"></div>
<div class="t" style="left:1261.1px;top:437px;width:20px;text-align:center;font-size:10.5px;line-height:14px;color:#6a6a6a">15</div>
<div class="a" style="left:1281.4px;top:443.3px;width:1.4px;height:1.4px;background:#8c8c8c"></div>
<div class="a" style="left:1292.7px;top:441px;width:1px;height:6px;background:#8c8c8c"></div>
<div class="a" style="left:1303.5px;top:443.3px;width:1.4px;height:1.4px;background:#8c8c8c"></div>
<div class="t" style="left:1305.2px;top:437px;width:20px;text-align:center;font-size:10.5px;line-height:14px;color:#6a6a6a">16</div>
<div class="a" style="left:1325.6px;top:443.3px;width:1.4px;height:1.4px;background:#8c8c8c"></div>
<div class="a" style="left:1336.8px;top:441px;width:1px;height:6px;background:#8c8c8c"></div>
<div class="a" style="left:1347.7px;top:443.3px;width:1.4px;height:1.4px;background:#8c8c8c"></div>
<div class="a" style="left:1369.7px;top:443.3px;width:1.4px;height:1.4px;background:#8c8c8c"></div>
<div class="a" style="left:1381.0px;top:441px;width:1px;height:6px;background:#8c8c8c"></div>
<div class="a" style="left:1391.8px;top:443.3px;width:1.4px;height:1.4px;background:#8c8c8c"></div>
<div class="a" style="left:1403.0px;top:441px;width:1px;height:6px;background:#8c8c8c"></div>
<div class="a" style="left:1413.9px;top:443.3px;width:1.4px;height:1.4px;background:#8c8c8c"></div>
<!-- DOCUMENT -->
<div class="a" style="left:212px;top:458px;width:1496px;height:463px;overflow:hidden">
  <div class="a" style="left:287px;top:0;width:928px;height:470px;background:#fff;border-left:1px solid #c8c6c9;border-right:1px solid #b8b6b9"></div>
  <div class="a" style="left:398px;top:0;width:1.5px;height:470px;background:#3c3c3c"></div>
  <div class="a" style="left:772px;top:0;width:1.5px;height:470px;background:#3c3c3c"></div>
  <div class="a" style="left:1147.5px;top:0;width:1.5px;height:470px;background:#3c3c3c"></div>
  <div class="dl dj" style="left:407.2px;top:-17.35px;width:357.5px;padding-left:55.5px;">3. Дистанційне та змішане</div>
<div class="dl dj" style="left:407.2px;top:7.72px;width:357.5px;">навчання в умовах інклюзивної</div>
<div class="dl" style="left:407.2px;top:32.79px;width:357.5px;">освіти.</div>
<div class="dl db dj" style="left:407.2px;top:82.93px;width:357.5px;padding-left:55.5px;">Практичне заняття 1. Тема.</div>
<div class="dl db dj" style="left:407.2px;top:108.00px;width:357.5px;">Практичне застосування</div>
<div class="dl db dj" style="left:407.2px;top:133.07px;width:357.5px;">універсального дизайну навчання у</div>
<div class="dl db" style="left:407.2px;top:158.14px;width:357.5px;">природничій освітній галузі</div>
<div class="dl dj" style="left:407.2px;top:183.21px;width:357.5px;padding-left:55.5px;">1. Аналіз і адаптація/</div>
<div class="dl" style="left:407.2px;top:208.28px;width:357.5px;">модифікація</div>
<div class="dl dj" style="left:407.2px;top:233.35px;width:357.5px;">лабораторних/практичних робіт</div>
<div class="dl dj" style="left:407.2px;top:258.42px;width:357.5px;">(проаналізувати типову</div>
<div class="dl dj" style="left:407.2px;top:283.49px;width:357.5px;">лабораторну/практичну роботу з</div>
<div class="dl" style="left:407.2px;top:308.56px;width:357.5px;">біології/хімії/фізики/природничих</div>
<div class="dl dj" style="left:407.2px;top:333.63px;width:357.5px;">наук та запропонувати її модифікацію</div>
<div class="dl" style="left:407.2px;top:358.70px;width:357.5px;">для учня з ООП.</div>
<div class="dl dj" style="left:407.2px;top:383.77px;width:357.5px;padding-left:55.5px;">2. Розроблення</div>
<div class="dl" style="left:407.2px;top:408.84px;width:357.5px;">адаптованих/модифікованих</div>
<div class="dl dj" style="left:407.2px;top:433.91px;width:357.5px;">дидактичних матеріалів (розробити</div>
<div class="dl dj" style="left:782.2px;top:-17.35px;width:358.3px;">3. Distance and blended learning in the</div>
<div class="dl" style="left:782.2px;top:7.72px;width:358.3px;">context of inclusive education.</div>
<div class="dl db" style="left:782.2px;top:82.93px;width:358.3px;">Practical class 1.</div>
<div class="dl db dj" style="left:782.2px;top:108.00px;width:358.3px;">Practical application of universal</div>
<div class="dl db" style="left:782.2px;top:133.07px;width:358.3px;">design for learning natural sciences</div>
<div class="dl dj" style="left:782.2px;top:183.21px;width:358.3px;">1. The analysis and</div>
<div class="dl dj" style="left:782.2px;top:208.28px;width:358.3px;">adaptation/modification of</div>
<div class="dl dj" style="left:782.2px;top:233.35px;width:358.3px;">laboratory/practical work (analyze a</div>
<div class="dl dj" style="left:782.2px;top:258.42px;width:358.3px;">typical laboratory/practical work in</div>
<div class="dl" style="left:782.2px;top:283.49px;width:358.3px;">biology/chemistry/physics/natural</div>
<div class="dl dj" style="left:782.2px;top:308.56px;width:358.3px;">sciences and suggest its modification for</div>
<div class="dl" style="left:782.2px;top:333.63px;width:358.3px;">SEN students.</div>
<div class="dl dj" style="left:782.2px;top:383.77px;width:358.3px;">2. The development of</div>
<div class="dl dj" style="left:782.2px;top:408.84px;width:358.3px;">adaptable/modifiable learning/didactic</div>
<div class="dl dj" style="left:782.2px;top:433.91px;width:358.3px;">materials (develop or adapt/modify 1-2</div>
</div>
<!-- ruler indent markers over doc top -->
<svg style="left:603px;top:444px" width="14" height="14" viewBox="0 0 14 14"><path d="M1 6.5 L7 1 L13 6.5 V9.5 H1 Z M1 9.5 V13 H13 V9.5" fill="#fdfdfd" stroke="#8a8a8a" stroke-width="1"/></svg>
<svg style="left:658px;top:432px" width="14" height="10" viewBox="0 0 14 10"><path d="M1 1 H13 V4 L7 9 L1 4 Z" fill="#fdfdfd" stroke="#8a8a8a" stroke-width="1"/></svg>
<svg style="left:1354px;top:444px" width="14" height="11" viewBox="0 0 14 11"><path d="M1 10 V6 L7 1 L13 6 V10 Z" fill="#fdfdfd" stroke="#8a8a8a" stroke-width="1"/></svg>
<!-- mouse cursor -->
<svg style="left:1186px;top:853px" width="16" height="25" viewBox="0 0 16 25"><path d="M1 1 V19 L5.5 15 L9 23 L12 21.5 L8.5 14 H14 Z" fill="#fff" stroke="#222" stroke-width="1.2" stroke-linejoin="round"/></svg>


<!-- ZOOM TOOLBAR -->
<div class="a" style="left:0;top:921px;width:1920px;height:87px;background:#000"></div>
<!-- Audio -->
<svg style="left:60px;top:935px" width="38" height="40" viewBox="0 0 38 40" fill="none" stroke="#fff" stroke-width="2.2"><rect x="13" y="2" width="12" height="21" rx="6"/><path d="M7 17 C7 24.5 11.5 29 19 29 C26.5 29 31 24.5 31 17 M19 29 V37 M12.5 37 H25.5"/><path d="M2.5 36 L35 3.5" stroke="#000" stroke-width="6"/><path d="M2.5 36 L35 3.5" stroke="#e8215e" stroke-width="3.6" stroke-linecap="round"/></svg>
<svg style="left:120px;top:949px" width="14" height="10" viewBox="0 0 14 10" fill="none" stroke="#fff" stroke-width="2.2"><path d="M1.5 8 L7 2.5 L12.5 8"/></svg>
<div class="t" style="left:28px;top:980.5px;width:100px;text-align:center;font-size:17.3px;line-height:20px;font-weight:bold;color:#fff">Audio</div>
<!-- Video -->
<svg style="left:198px;top:944px" width="38" height="24" viewBox="0 0 38 24" fill="none" stroke="#fff" stroke-width="2.2"><rect x="1.5" y="1.5" width="23" height="21" rx="4"/><path d="M24.5 9 L35.5 2 V22 L24.5 15"/></svg>
<svg style="left:266px;top:949px" width="14" height="10" viewBox="0 0 14 10" fill="none" stroke="#fff" stroke-width="2.2"><path d="M1.5 8 L7 2.5 L12.5 8"/></svg>
<div class="t" style="left:167.5px;top:980.5px;width:100px;text-align:center;font-size:17.3px;line-height:20px;font-weight:bold;color:#fff">Video</div>
<!-- Participants -->
<svg style="left:566px;top:942px" width="29" height="27" viewBox="0 0 29 27" fill="none" stroke="#fff" stroke-width="2.2"><circle cx="8" cy="5.5" r="4.2"/><path d="M1.5 24.5 V20 C1.5 16 4.5 13.5 8 13.5 C9.5 13.5 11 14 12 14.8"/><circle cx="19.5" cy="11" r="4.2"/><path d="M11 25 C11 21.5 14 19 19.5 19 C25 19 27.8 21.5 27.8 25 Z"/></svg>
<div class="t" style="left:605px;top:943px;font-size:17.3px;line-height:20px;color:#c8c8c8">33</div>
<svg style="left:653px;top:949px" width="14" height="10" viewBox="0 0 14 10" fill="none" stroke="#fff" stroke-width="2.2"><path d="M1.5 8 L7 2.5 L12.5 8"/></svg>
<div class="t" style="left:520.9px;top:980.5px;width:120px;text-align:center;font-size:16.8px;line-height:20px;font-weight:bold;color:#fff">Participants</div>
<!-- Chat -->
<svg style="left:726px;top:936px" width="37" height="37" viewBox="0 0 37 37" fill="none" stroke="#fff" stroke-width="2.2"><path d="M12 7 C12 3.5 14 1.5 18 1.5 H29 C33 1.5 35.5 4 35.5 8 V15 C35.5 19 33 21.5 29 21.5"/><path d="M8 9 H22 C26 9 28.5 11.5 28.5 15.5 V21.5 C28.5 25.5 26 28 22 28 H17 L11 34 V28 H8 C4 28 1.5 25.5 1.5 21.5 V15.5 C1.5 11.5 4 9 8 9 Z"/><circle cx="8.5" cy="18.5" r="1" fill="#fff"/><circle cx="15" cy="18.5" r="1" fill="#fff"/><circle cx="21.5" cy="18.5" r="1" fill="#fff"/></svg>
<svg style="left:789px;top:949px" width="14" height="10" viewBox="0 0 14 10" fill="none" stroke="#fff" stroke-width="2.2"><path d="M1.5 8 L7 2.5 L12.5 8"/></svg>
<div class="t" style="left:695.6px;top:980.5px;width:100px;text-align:center;font-size:16.2px;line-height:20px;font-weight:bold;color:#fff">Chat</div>
<!-- React -->
<svg style="left:853px;top:938px" width="40" height="34" viewBox="0 0 40 34" fill="none" stroke="#fff" stroke-width="2.2"><path d="M16 32 L4 20 C0 16 0.5 8 6 4.5 C11 1.5 16.5 3 20 8 C23.5 3 29.5 1.5 34 4.5 C39.5 8 39 15.5 35 19.5 L22 31 C20 33 18 33.5 16 32 Z"/></svg>
<div class="t" style="left:823.2px;top:980.5px;width:100px;text-align:center;font-size:16.3px;line-height:20px;font-weight:bold;color:#fff">React</div>
<!-- Share -->
<div class="a" style="left:988px;top:940px;width:37px;height:30px;border-radius:5px;background:#1fd87c"></div>
<svg style="left:996px;top:945px" width="21" height="20" viewBox="0 0 21 20"><path d="M10.5 2 L3 9.5 H8 V18 H13 V9.5 H18 Z" fill="#000"/></svg>
<div class="t" style="left:956.7px;top:980.5px;width:100px;text-align:center;font-size:16.8px;line-height:20px;font-weight:bold;color:#fff">Share</div>
<!-- Meeting info -->
<svg style="left:1134px;top:936px" width="39" height="39" viewBox="0 0 39 39" fill="none" stroke="#fff" stroke-width="2.2"><circle cx="19.5" cy="19.5" r="17.5"/><circle cx="19.5" cy="11" r="2" fill="#fff" stroke="none"/><path d="M16 17 H20 V28 M15.5 28 H23.5" stroke-width="2.6"/></svg>
<div class="t" style="left:1094.2px;top:980.5px;width:120px;text-align:center;font-size:17px;line-height:20px;font-weight:bold;color:#fff;letter-spacing:0.3px">Meeting info</div>
<!-- Apps -->
<svg style="left:1271px;top:939px" width="34" height="33" viewBox="0 0 34 33" fill="none" stroke="#fff" stroke-width="2.2"><path d="M1.5 13 V7 C1.5 3.5 3.5 1.5 7 1.5 H13"/><circle cx="27" cy="7.5" r="5.5"/><circle cx="7.5" cy="26" r="5.5"/><path d="M32 20 V26 C32 29.5 30 31.5 26.5 31.5 H20.5"/></svg>
<div class="t" style="left:1237.5px;top:980.5px;width:100px;text-align:center;font-size:16.6px;line-height:20px;font-weight:bold;color:#fff">Apps</div>
<!-- Record -->
<svg style="left:1389px;top:936px" width="38" height="38" viewBox="0 0 38 38" fill="none" stroke="#fff" stroke-width="2.2"><circle cx="19" cy="19" r="17"/><circle cx="19" cy="19" r="7.5" fill="#fff" stroke="none"/></svg>
<div class="t" style="left:1357.5px;top:980.5px;width:100px;text-align:center;font-size:17px;line-height:20px;font-weight:bold;color:#fff">Record</div>
<!-- More -->
<svg style="left:1512px;top:936px" width="39" height="39" viewBox="0 0 39 39" fill="none" stroke="#fff" stroke-width="2.2"><circle cx="19.5" cy="19.5" r="17.5"/><circle cx="11.5" cy="19.5" r="2" fill="#fff" stroke="none"/><circle cx="19.5" cy="19.5" r="2" fill="#fff" stroke="none"/><circle cx="27.5" cy="19.5" r="2" fill="#fff" stroke="none"/></svg>
<div class="t" style="left:1481.3px;top:980.5px;width:100px;text-align:center;font-size:17.5px;line-height:20px;font-weight:bold;color:#fff">More</div>
<!-- Leave -->
<svg style="left:1830px;top:935px" width="40" height="40" viewBox="0 0 40 40"><path d="M24 2.5 H36.5 V28 L27 34.5 V9 L36.5 2.5" fill="none" stroke="#e8215e" stroke-width="2.2" stroke-linejoin="round"/><circle cx="12" cy="8" r="4.5" fill="none" stroke="#fff" stroke-width="2.2"/><path d="M8 14 C4 15.5 2 19 3 21.5 C4 23 6 22.5 7 21 L8.5 19 L7.5 27 L3.5 33.5 C2.5 36 5.5 37.5 7 35.5 L11 29 L13.5 35.5 C14.5 38 18 37 17 34 L14.5 26 L15 20 L17 22 C18.5 23.5 21 22.5 20.5 20 C19.5 16.5 16 14 12 13.5 Z" fill="none" stroke="#fff" stroke-width="2" stroke-linejoin="round"/></svg>
<div class="t" style="left:1798.8px;top:980.5px;width:100px;text-align:center;font-size:16.2px;line-height:20px;font-weight:bold;color:#fff">Leave</div>


<!-- TASKBAR -->
<div class="a" style="left:0;top:1008px;width:1920px;height:72px;background:linear-gradient(90deg,#d2e5f1 0%,#d4e6f1 50%,#d9e8f0 100%)"></div>
<div class="a" style="left:0;top:1008px;width:1920px;height:1px;background:#f4f6f8"></div>
<div class="a" style="left:0;top:1009px;width:1920px;height:2px;background:#a8b2b8"></div>
<!-- weather -->
<svg style="left:29px;top:1028px" width="33" height="33" viewBox="0 0 33 33" fill="none" stroke="#3a8ae0" stroke-width="2.6" stroke-linecap="round"><path d="M16.5 2 V31 M4 9.25 L29 23.75 M4 23.75 L29 9.25"/><path d="M12.5 4 L16.5 7.5 L20.5 4 M12.5 29 L16.5 25.5 L20.5 29 M3.5 14 L8.5 12.5 L7 7.5 M26 25.5 L24.5 20.5 L29.5 19 M3.5 19 L8.5 20.5 L7 25.5 M26 7.5 L24.5 12.5 L29.5 14" stroke-width="2.2"/><circle cx="16.5" cy="16.5" r="3.8" fill="#d4e6f1"/></svg>
<div class="t" style="left:76px;top:1022px;font-size:18.2px;line-height:22px;color:#1c1c1c">2 cm of snow</div>
<div class="t" style="left:76px;top:1046px;font-size:18.2px;line-height:22px;color:#5c6064">Monday</div>
<!-- start -->
<svg style="left:525px;top:1028px" width="35" height="35" viewBox="0 0 35 35"><defs><linearGradient id="wg" x1="0" y1="0" x2="1" y2="1"><stop offset="0" stop-color="#52c6fc"/><stop offset="1" stop-color="#0a6fd8"/></linearGradient></defs><rect x="0" y="0" width="16.5" height="16.5" rx="1.5" fill="url(#wg)"/><rect x="18.5" y="0" width="16.5" height="16.5" rx="1.5" fill="url(#wg)"/><rect x="0" y="18.5" width="16.5" height="16.5" rx="1.5" fill="url(#wg)"/><rect x="18.5" y="18.5" width="16.5" height="16.5" rx="1.5" fill="url(#wg)"/></svg>
<!-- search -->
<div class="a" style="left:582px;top:1022.5px;width:327px;height:45px;border-radius:23px;background:#f2f7fa;border:1px solid #c8d6de;box-shadow:0 1px 1px rgba(0,0,0,0.06)"></div>
<svg style="left:598px;top:1034px" width="23" height="23" viewBox="0 0 23 23" fill="none" stroke="#1a1a1a" stroke-width="2.4"><circle cx="9.5" cy="9.5" r="7.5"/><path d="M15 15 L21 21" stroke-linecap="round"/></svg>
<div class="t" style="left:637px;top:1032px;font-size:20.9px;line-height:26px;color:#5c5c5c">Пошук</div>
<svg style="left:838px;top:1027px" width="54" height="36" viewBox="0 0 54 36"><path d="M2 26 L14 18 L12 30 Z" fill="#3a8a2a"/><path d="M52 10 L40 14 L44 26 Z" fill="#3a8a2a"/><path d="M27 2 L31 12 L42 8 L35 17 L46 22 L34 23 L38 34 L28 27 L19 35 L20 24 L8 24 L17 17 L10 8 L22 12 Z" fill="#e02a1e"/><path d="M27 8 L29 15 L36 14 L31 19 L35 25 L28 22 L22 27 L23 20 L16 18 L23 15 Z" fill="#f04a30"/><circle cx="27.5" cy="18" r="3.2" fill="#f6d020"/></svg>
<!-- task view -->
<svg style="left:929px;top:1028px" width="36" height="34" viewBox="0 0 36 34"><rect x="12" y="1" width="23" height="22" rx="2" fill="#fafafa" stroke="#dcdcdc" stroke-width="1"/><rect x="1" y="11" width="23" height="22" rx="2.5" fill="#2a2a2a"/><rect x="12" y="11" width="12" height="12" fill="#bdbdbd"/></svg>
<!-- edge -->
<svg style="left:993px;top:1026px" width="38" height="38" viewBox="0 0 38 38"><defs><linearGradient id="eg1" x1="0" y1="0" x2="0" y2="1"><stop offset="0" stop-color="#1a8ad8"/><stop offset="1" stop-color="#0a4a98"/></linearGradient><linearGradient id="eg2" x1="0" y1="0" x2="1" y2="0.3"><stop offset="0" stop-color="#2aa8e8"/><stop offset="0.6" stop-color="#38c0d0"/><stop offset="1" stop-color="#70d860"/></linearGradient></defs><circle cx="19" cy="19" r="18" fill="url(#eg2)"/><path d="M1 19 C1 28.5 9 37 19 37 C26 37 32 33 35 27 C32 29.5 27 30 23.5 28 C19 25.5 19.5 20 22 18 C17 15 8 14.5 1 19 Z" fill="url(#eg1)"/><ellipse cx="27" cy="20.5" rx="8.5" ry="4.2" fill="#d8e7f0"/><path d="M7 26 C6 20 12 15 19 16" fill="none" stroke="#1aa0e8" stroke-width="2"/></svg>
<div class="a" style="left:1008.5px;top:1069.5px;width:9px;height:3.5px;border-radius:2px;background:#6a6e72"></div>
<!-- chrome -->
<svg style="left:1060px;top:1027px" width="36" height="36" viewBox="0 0 36 36"><path d="M18 18 L2.84 9.25 A17.5 17.5 0 0 1 33.16 9.25 Z" fill="#ea4335"/><path d="M18 18 L33.16 9.25 A17.5 17.5 0 0 1 18 35.5 Z" fill="#fbbc04"/><path d="M18 18 L18 35.5 A17.5 17.5 0 0 1 2.84 9.25 Z" fill="#34a853"/><circle cx="18" cy="18" r="8.2" fill="#fff"/><circle cx="18" cy="18" r="6.4" fill="#1a73e8"/></svg>
<div class="a" style="left:1075px;top:1069.5px;width:9px;height:3.5px;border-radius:2px;background:#6a6e72"></div>
<!-- explorer -->
<svg style="left:1126px;top:1028px" width="37" height="35" viewBox="0 0 37 35"><path d="M0 2 C0 1 1 0 2 0 H12 L15 3 H35 C36 3 37 4 37 5 V33 C37 34 36 35 35 35 H2 C1 35 0 34 0 33 Z" fill="#e8a818"/><rect x="0" y="7" width="37" height="28" rx="1.5" fill="#fbd54a"/><rect x="8" y="22" width="21" height="13" rx="2.5" fill="#1e78c8"/><rect x="13" y="26.5" width="11" height="1.8" fill="#0c4a90"/></svg>
<!-- skype -->
<svg style="left:1193px;top:1027px" width="35" height="35" viewBox="0 0 35 35"><circle cx="10" cy="10" r="9" fill="#1a9ae0"/><circle cx="25" cy="25" r="9" fill="#1a9ae0"/><circle cx="17.5" cy="17.5" r="15" fill="#1ba8ec"/><text x="17.5" y="25" font-family="Liberation Sans" font-weight="bold" font-size="21" fill="#fff" text-anchor="middle">S</text></svg>
<!-- viber -->
<svg style="left:1259px;top:1027px" width="34" height="37" viewBox="0 0 34 37"><path d="M17 1.5 C26 1.5 32.5 6 32.5 16 C32.5 25 27 30 17 30 L12.5 30 L8 35 V29 C4 27 1.5 23 1.5 16 C1.5 6 8 1.5 17 1.5 Z" fill="#7b57d2"/><path d="M17 4.5 C24 4.5 29.5 8 29.5 16 C29.5 23 25 27 17 27 L12 27 L10.5 29 V26 C6 24.5 4.5 21 4.5 16 C4.5 8 10 4.5 17 4.5 Z" fill="#f4f0fb"/><path d="M11 9 C10 10 9.5 11.5 10.5 13.5 C12 17 15 20 18.5 21.5 C20.5 22.5 22 22 23 21 L22.5 18.5 L19.5 17.5 L18 19 C16 18 14 16 13 14 L14.5 12.5 L13.5 9.5 Z" fill="#7b57d2"/></svg>
<div class="a" style="left:1279px;top:1020px;width:24px;height:24px;border-radius:50%;background:#e8302a"></div>
<div class="t" style="left:1279px;top:1021px;width:24px;text-align:center;font-size:14.5px;line-height:22px;color:#fff">18</div>
<div class="a" style="left:1273px;top:1069.5px;width:9px;height:3.5px;border-radius:2px;background:#6a6e72"></div>
<!-- zoom -->
<div class="a" style="left:1315px;top:1017.5px;width:55px;height:55px;border-radius:5px;background:#e6eff5;border:1px solid #d0dce4"></div>
<div class="a" style="left:1325px;top:1027px;width:35px;height:35px;border-radius:50%;background:radial-gradient(circle at 50% 35%,#2f74f0 0%,#0b5cff 60%,#0a4ad0 100%)"></div>
<div class="t" style="left:1325px;top:1036px;width:35px;text-align:center;font-size:9.5px;line-height:16px;font-weight:bold;color:#fff;letter-spacing:-0.3px">zoom</div>
<div class="a" style="left:1331px;top:1069.5px;width:23.5px;height:4px;border-radius:2px;background:#2b6fd6"></div>
<!-- tray -->
<svg style="left:1478px;top:1039px" width="18" height="12" viewBox="0 0 18 12" fill="none" stroke="#1a1a1a" stroke-width="1.7"><path d="M1.5 10 L9 2.5 L16.5 10"/></svg>
<svg style="left:1521px;top:1033px" width="28" height="24" viewBox="0 0 28 24"><path d="M7 20 C3.5 20 1.5 17.5 1.5 14.5 C1.5 11.5 4 9 7 9 C8 5 11 3 14.5 3 C19 3 22 6 22.5 10 C25 10.5 26.5 12.5 26.5 15 C26.5 18 24.5 20 21.5 20 Z" fill="#d0d0d0" stroke="#2a2a2a" stroke-width="1.6"/><path d="M4 2 L23 22.5" stroke="#2a2a2a" stroke-width="1.7"/></svg>
<svg style="left:1573px;top:1033px" width="19" height="25" viewBox="0 0 19 25" fill="none" stroke="#2260c8" stroke-width="1.8"><rect x="5.5" y="1" width="8" height="14" rx="4"/><path d="M1.5 11 C1.5 16 5 19 9.5 19 C14 19 17.5 16 17.5 11 M9.5 19 V24"/></svg>
<div class="t" style="left:1625px;top:1035px;font-size:15.9px;line-height:20px;color:#1c1c1c">УКР</div>
<svg style="left:1684px;top:1034px" width="26" height="20" viewBox="0 0 26 20" fill="none" stroke="#1a1a1a" stroke-width="1.7"><path d="M1.5 7 C8 1 18 1 24.5 7"/><path d="M5 10.5 C9.5 6.5 16.5 6.5 21 10.5"/><path d="M8.5 14 C11 12 15 12 17.5 14"/><circle cx="13" cy="17.5" r="1.6" fill="#1a1a1a" stroke="none"/></svg>
<svg style="left:1719px;top:1034px" width="27" height="21" viewBox="0 0 27 21" fill="none" stroke="#1a1a1a" stroke-width="1.6"><path d="M1.5 7 H6 L11.5 2 V19 L6 14 H1.5 Z"/><path d="M15 7 C16.5 8.5 16.5 12.5 15 14"/><path d="M18.5 4.5 C21.5 7.5 21.5 13.5 18.5 16.5"/><path d="M22 2 C26 6 26 15 22 19"/></svg>
<svg style="left:1757px;top:1036px" width="25" height="17" viewBox="0 0 25 17"><rect x="1" y="1.5" width="19.5" height="14" rx="3" fill="none" stroke="#1a1a1a" stroke-width="1.6"/><rect x="4" y="4.5" width="6" height="8" fill="#1a1a1a"/><rect x="21.5" y="6" width="2.5" height="5" rx="1" fill="#1a1a1a"/></svg>
<div class="t" style="left:1791px;top:1023px;width:100px;text-align:right;font-size:17px;line-height:22px;color:#1c1c1c">15:28</div>
<div class="t" style="left:1791px;top:1047px;width:100px;text-align:right;font-size:17.1px;line-height:22px;color:#1c1c1c">12.12.2025</div>

</body></html>
